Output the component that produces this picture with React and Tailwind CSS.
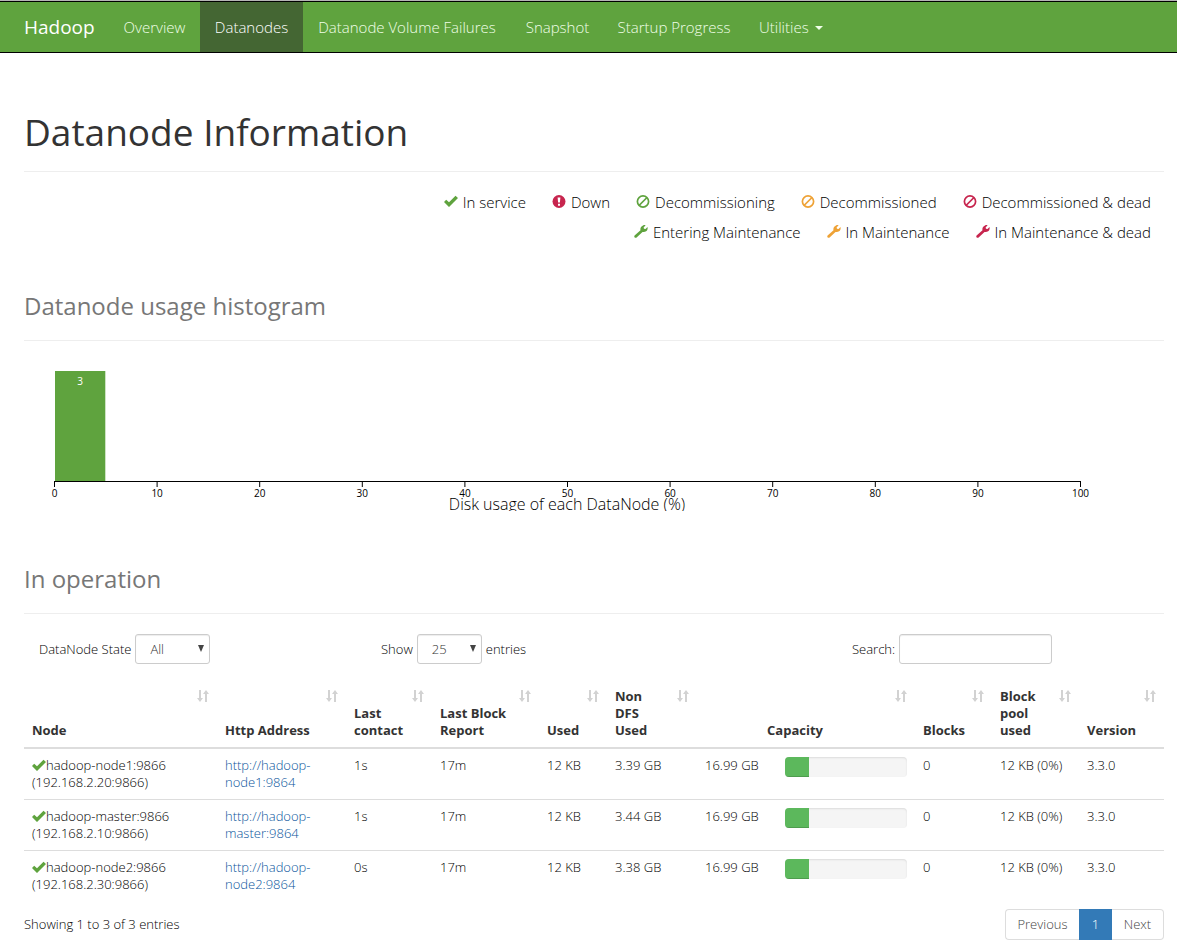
import React, { useState } from 'react';

const navItems = [
  { label: 'Overview', width: 'w-[91px]' },
  { label: 'Datanodes', width: 'w-[103px]', active: true },
  { label: 'Datanode Volume Failures', width: 'w-[208px]' },
  { label: 'Snapshot', width: 'w-[93px]' },
  { label: 'Startup Progress', width: 'w-[140px]' },
];

const legendRows = [
  [
    { label: 'In service', icon: 'ok', color: 'text-[#5fa33e]' },
    { label: 'Down', icon: 'down', color: 'text-[#c7254e]' },
    { label: 'Decommissioning', icon: 'ban', color: 'text-[#5fa33e]' },
    { label: 'Decommissioned', icon: 'ban', color: 'text-[#eea236]' },
    { label: 'Decommissioned & dead', icon: 'ban', color: 'text-[#c7254e]' },
  ],
  [
    { label: 'Entering Maintenance', icon: 'wrench', color: 'text-[#5fa33e]' },
    { label: 'In Maintenance', icon: 'wrench', color: 'text-[#eea236]' },
    { label: 'In Maintenance & dead', icon: 'wrench', color: 'text-[#c7254e]' },
  ],
];

const columns = [
  { label: 'Node' },
  { label: 'Http Address' },
  { label: 'Last contact' },
  { label: 'Last Block Report' },
  { label: 'Used' },
  { label: 'Non DFS Used' },
  { label: 'Capacity', span: 2 },
  { label: 'Blocks' },
  { label: 'Block pool used' },
  { label: 'Version' },
];

const nodes = [
  { name: 'hadoop-node1', ip: '192.168.2.20', contact: '1s', report: '17m', used: '12 KB', nonDfs: '3.39 GB', capacity: '16.99 GB', percent: 20, blocks: 0, pool: '12 KB (0%)', version: '3.3.0' },
  { name: 'hadoop-master', ip: '192.168.2.10', contact: '1s', report: '17m', used: '12 KB', nonDfs: '3.44 GB', capacity: '16.99 GB', percent: 20, blocks: 0, pool: '12 KB (0%)', version: '3.3.0' },
  { name: 'hadoop-node2', ip: '192.168.2.30', contact: '0s', report: '17m', used: '12 KB', nonDfs: '3.38 GB', capacity: '16.99 GB', percent: 20, blocks: 0, pool: '12 KB (0%)', version: '3.3.0' },
];

const StateIcon = ({ type }) => (
  <svg width="14" height="14" viewBox="0 0 14 14" fill="currentColor" aria-hidden="true" className="inline-block shrink-0">
    {type === 'ok' && <path d="M0 7 2.2 4.8 5 7.2 11.5.8 14 3 5 12Z" />}
    {type === 'down' && (
      <>
        <circle cx="7" cy="6.5" r="6.5" />
        <path fill="#fff" d="M5.6 2.5h2.8L7.9 7.5H6.1ZM6 8.7h2v2H6Z" />
      </>
    )}
    {type === 'ban' && (
      <g fill="none" stroke="currentColor" strokeWidth="1.7">
        <circle cx="7" cy="6.5" r="5.6" />
        <path d="M3 10.5 11 2.5" />
      </g>
    )}
    {type === 'wrench' && (
      <path d="M.6 10.6 6.5 5.2C6 3.2 7 1.2 9 .4c1-.4 1.8-.4 2.6-.1L9.6 2.4l.4 1.4 1.5.3 2-2c.4 1.6 0 3.2-1.4 4.2-1 .8-2.5 1-3.6.6L2.6 12.5C1.3 13.4-.5 11.9.6 10.6Z" />
    )}
  </svg>
);

const SortIcon = () => (
  <svg width="12" height="12" viewBox="0 0 12 12" fill="#d2d2d2" aria-hidden="true" className="absolute right-2 top-[10px]">
    <path d="M2 0h2v8h2L3 12 0 8h2ZM8 12h2V4h2L9 0 6 4h2Z" />
  </svg>
);

const Histogram = () => {
  const ticks = [0, 10, 20, 30, 40, 50, 60, 70, 80, 90, 100];
  const x = (v) => 30.5 + v * 10.26;

  return (
    <svg width="1090" height="150" role="img" aria-label="Datanode usage histogram" className="mt-5 block overflow-hidden">
      <rect x="31" y="10" width="50.3" height="110" fill="#5fa33e" />
      <text x="56" y="24" textAnchor="middle" fontSize="10" fill="#fff" className="font-normal">3</text>
      <path d="M30.5 126V120.5H1056.5V126" fill="none" stroke="#000" />
      {ticks.map((t) => (
        <g key={t}>
          <path d={`M${x(t)} 120V126`} stroke="#000" />
          <text x={x(t)} y="136" textAnchor="middle" fontSize="10" className="font-normal">{t}</text>
        </g>
      ))}
      <text x="543" y="149" textAnchor="middle" fontSize="16">Disk usage of each DataNode (%)</text>
    </svg>
  );
};

const Select = ({ id, value, onChange, options, width }) => (
  <span className="relative inline-block">
    <select
      id={id}
      value={value}
      onChange={onChange}
      className={`${width} h-[30px] appearance-none rounded-[3px] border border-[#ccc] bg-white pl-[14px] text-[13px] text-[#333] shadow-[inset_0_1px_1px_rgba(0,0,0,0.075)]`}
    >
      {options.map((o) => (
        <option key={o}>{o}</option>
      ))}
    </select>
    <svg width="6" height="7" viewBox="0 0 6 7" fill="#444" aria-hidden="true" className="pointer-events-none absolute right-[6px] top-[11px]">
      <path d="M0 0h6L3 7Z" />
    </svg>
  </span>
);

const SectionTitle = ({ children }) => (
  <h2 className="border-b border-[#eee] pb-[18px] text-[24px] font-normal leading-[32px] text-[#777]">{children}</h2>
);

export default function App() {
  const [state, setState] = useState('All');
  const [pageSize, setPageSize] = useState('25');
  const [search, setSearch] = useState('');

  const visible = nodes.filter((n) => n.name.includes(search) || n.ip.includes(search));

  return (
    <div className="bg-white font-['Open_Sans','Noto_Sans',sans-serif] text-[13px] font-light leading-[17px] text-black">
      {/* Navigation */}
      <header className="border-t border-[#b5b5b5]">
        <nav className="flex h-[52px] items-stretch whitespace-nowrap border-y border-black bg-[#5fa33e] pl-6 text-[15px] text-[#f0ffe8]">
          <a href="#" className="flex w-[85px] items-center text-[19px] font-normal text-white">Hadoop</a>
          {navItems.map((item) => (
            <a
              key={item.label}
              href="#"
              className={`${item.width} flex items-center justify-center ${item.active ? 'bg-[#446633] text-white' : ''}`}
            >
              {item.label}
            </a>
          ))}
          <button type="button" className="flex items-center gap-[6px] px-[15px]">
            Utilities
            <svg width="8" height="4" viewBox="0 0 8 4" fill="currentColor" aria-hidden="true" className="mt-[2px]">
              <path d="M0 0h8L4 4Z" />
            </svg>
          </button>
        </nav>
      </header>

      <main className="pb-2 pl-6 pr-[13px]">
        <h1 className="mt-[55px] border-b border-[#eee] pb-[15px] text-[37px] font-normal leading-[48px] text-[#333]">Datanode Information</h1>

        {/* Legend */}
        <div className="mt-[15px] pr-[13px] text-[15px] leading-[30px]">
          {legendRows.map((row, i) => (
            <ul key={i} className="flex justify-end gap-[26px]">
              {row.map((entry) => (
                <li key={entry.label} className="flex items-center gap-[5px]">
                  <span className={`flex ${entry.color}`}>
                    <StateIcon type={entry.icon} />
                  </span>
                  {entry.label}
                </li>
              ))}
            </ul>
          ))}
        </div>

        <section className="mt-[43px]">
          <SectionTitle>Datanode usage histogram</SectionTitle>
          <Histogram />
        </section>

        <section className="mt-[52px]">
          <SectionTitle>In operation</SectionTitle>

          {/* Filters */}
          <div className="mt-5 grid grid-cols-[342fr_471fr_312fr] pl-[15px]">
            <div className="flex items-center gap-1">
              <label htmlFor="state">DataNode State</label>
              <Select id="state" width="w-[75px]" value={state} onChange={(e) => setState(e.target.value)} options={['All', 'In service', 'Down']} />
            </div>
            <div className="flex items-center gap-1">
              <label htmlFor="size">Show</label>
              <Select id="size" width="w-[65px]" value={pageSize} onChange={(e) => setPageSize(e.target.value)} options={['10', '25', '50', '100']} />
              <span>entries</span>
            </div>
            <div className="flex items-center gap-1">
              <label htmlFor="search">Search:</label>
              <input
                id="search"
                type="search"
                value={search}
                onChange={(e) => setSearch(e.target.value)}
                className="h-[30px] w-[153px] rounded-[3px] border border-[#ccc] px-2 shadow-[inset_0_1px_1px_rgba(0,0,0,0.075)]"
              />
            </div>
          </div>

          <table className="mt-4 w-full table-fixed border-collapse text-left">
            <colgroup>
              <col className="w-[193px]" />
              <col className="w-[129px]" />
              <col className="w-[86px]" />
              <col className="w-[107px]" />
              <col className="w-[68px]" />
              <col className="w-[90px]" />
              <col className="w-[80px]" />
              <col className="w-[138px]" />
              <col className="w-[77px]" />
              <col className="w-[87px]" />
              <col className="w-[85px]" />
            </colgroup>
            <thead>
              <tr className="border-b-2 border-[#ddd]">
                {columns.map((col) => (
                  <th key={col.label} colSpan={col.span} className="relative py-2 pl-2 pr-[30px] align-bottom text-[#333]">
                    <button type="button" className={`w-full font-bold ${col.span ? 'text-center' : 'text-left'}`}>
                      {col.label}
                      <SortIcon />
                    </button>
                  </th>
                ))}
              </tr>
            </thead>
            <tbody>
              {visible.map((node) => (
                <tr key={node.name} className="border-t border-[#ddd] align-top">
                  <td className="p-2">
                    <div className="flex items-center">
                      <span className="flex text-[#5fa33e]">
                        <StateIcon type="ok" />
                      </span>
                      {`${node.name}:9866`}
                    </div>
                    <div>{`(${node.ip}:9866)`}</div>
                  </td>
                  <td className="p-2">
                    <a href="#" className="text-[#0a559c]">{`http://${node.name}:9864`}</a>
                  </td>
                  <td className="p-2">{node.contact}</td>
                  <td className="p-2">{node.report}</td>
                  <td className="p-2">{node.used}</td>
                  <td className="p-2">{node.nonDfs}</td>
                  <td className="whitespace-nowrap p-2">{node.capacity}</td>
                  <td className="p-2">
                    <div className="h-5 overflow-hidden rounded-[4px] bg-[#f5f5f5] shadow-[inset_0_1px_2px_rgba(0,0,0,0.1)]">
                      <div
                        className="h-full bg-[#5cb85c] shadow-[inset_0_-1px_0_rgba(0,0,0,0.15)]"
                        style={{ width: `${node.percent}%` }}
                      />
                    </div>
                  </td>
                  <td className="p-2">{node.blocks}</td>
                  <td className="whitespace-nowrap p-2">{node.pool}</td>
                  <td className="p-2">{node.version}</td>
                </tr>
              ))}
            </tbody>
          </table>

          {/* Pagination */}
          <div className="mt-2 flex items-center justify-between">
            <p>{`Showing 1 to ${visible.length} of ${nodes.length} entries`}</p>
            <div className="flex h-[31px] text-[#444]">
              <button type="button" className="w-[74px] rounded-l-[4px] border border-r-0 border-[#ddd]">Previous</button>
              <button type="button" className="w-[33px] bg-[#337ab7] text-white">1</button>
              <button type="button" className="w-[52px] rounded-r-[4px] border border-l-0 border-[#ddd]">Next</button>
            </div>
          </div>
        </section>
      </main>
    </div>
  );
}
